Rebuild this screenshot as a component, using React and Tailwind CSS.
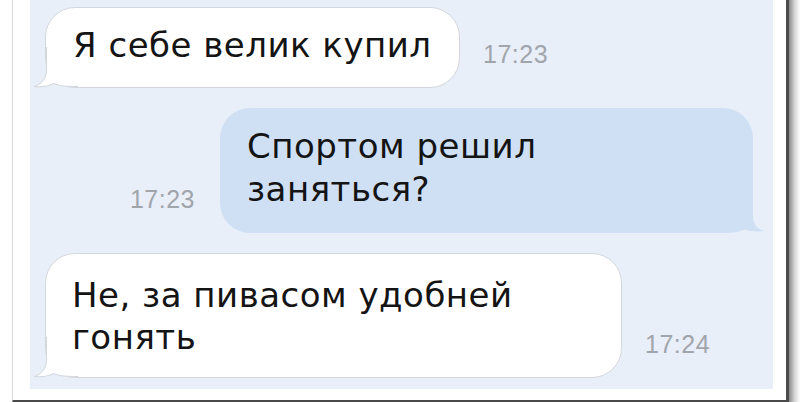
import React from 'react';

const font = { fontFamily: '"Liberation Sans", Arial, sans-serif' };
const msgFont = { fontFamily: '"DejaVu Sans", "Liberation Sans", sans-serif' };

// iOS-style bubble tail, drawn in bubble coords (origin = bottom-left corner)
const LeftTail = ({ fill, stroke }) => (
  <svg
    className="absolute left-[-14px] bottom-0 overflow-visible"
    width="46"
    height="44"
    viewBox="0 0 46 44"
  >
    <g transform="translate(14,44)">
      <path
        d="M0.5 -40 L0.5 -17 C0.5 -8 -5 -2.5 -12 -0.5 C-5 0.5 3 -1 8 -3.5 C13 -1 20 -0.5 32 -0.5 L0.5 -40 Z"
        fill={fill}
      />
      {stroke && (
        <path
          d="M0.5 -40 L0.5 -17 C0.5 -8 -5 -2.5 -12 -0.5 C-5 0.5 3 -1 8 -3.5 C13 -1 20 -0.5 32 -0.5"
          fill="none"
          stroke={stroke}
          strokeWidth="1"
        />
      )}
    </g>
  </svg>
);

const RightTail = ({ fill }) => (
  <svg
    className="absolute right-[-14px] bottom-0 overflow-visible"
    width="46"
    height="44"
    viewBox="0 0 46 44"
  >
    <g transform="translate(32,44) scale(-1,1)">
      <path
        d="M0 -40 L0 -17 C0 -8 -5 -3.5 -11 -2 C-4 -1 3 -1.5 8 -3.5 C13 -1 20 0 32 0 L0 -40 Z"
        fill={fill}
      />
    </g>
  </svg>
);

const Time = ({ children }) => (
  <span className="mb-[21px] text-[25px] leading-[25px] text-[#a0a5ac] whitespace-nowrap" style={font}>
    {children}
  </span>
);

export default function App() {
  return (
    <div className="w-[800px] h-[402px] bg-white flex overflow-hidden" style={font}>
      <div className="ml-[12px] w-[777px] h-[402px] flex border-l border-l-[#d9dbde] border-r-[3px] border-r-[#4b4b4b] border-b-2 border-b-[#4a4a4a] bg-white pl-[17px] pr-[13px] pb-[11px]">
        <div
          className="flex-1 bg-[#e9eff8] flex flex-col gap-[20px] pt-[7px] pl-[15px] pr-[20px] text-[34px] tracking-[0.5px] text-[#141414]"
          style={msgFont}
        >
          {/* incoming */}
          <div className="flex items-end gap-[23px]">
            <div className="relative w-[415px] bg-white border border-[#d3d7dd] rounded-[30px] pl-[27px] pt-[16px] pb-[20px] leading-[43px]">
              Я себе велик купил
              <LeftTail fill="#ffffff" stroke="#d3d7dd" />
            </div>
            <Time>17:23</Time>
          </div>

          {/* outgoing */}
          <div className="flex justify-end items-end gap-[25px]">
            <Time>17:23</Time>
            <div className="relative w-[533px] bg-[#cfe0f5] rounded-[30px] pl-[27px] pt-[17px] pb-[22px] leading-[43px]">
              Спортом решил
              <br />
              заняться?
              <RightTail fill="#cfe0f5" />
            </div>
          </div>

          {/* incoming */}
          <div className="flex items-end gap-[23px]">
            <div className="relative w-[577px] bg-white border border-[#d3d7dd] rounded-[30px] pl-[26px] pt-[20px] pb-[19px] leading-[42px]">
              Не, за пивасом удобней
              <br />
              гонять
              <LeftTail fill="#ffffff" stroke="#d3d7dd" />
            </div>
            <Time>17:24</Time>
          </div>
        </div>
      </div>
      <div className="w-[11px] h-[402px] bg-gradient-to-r from-[#8a8a8a] via-[#d4d4d4] to-white" />
    </div>
  );
}
